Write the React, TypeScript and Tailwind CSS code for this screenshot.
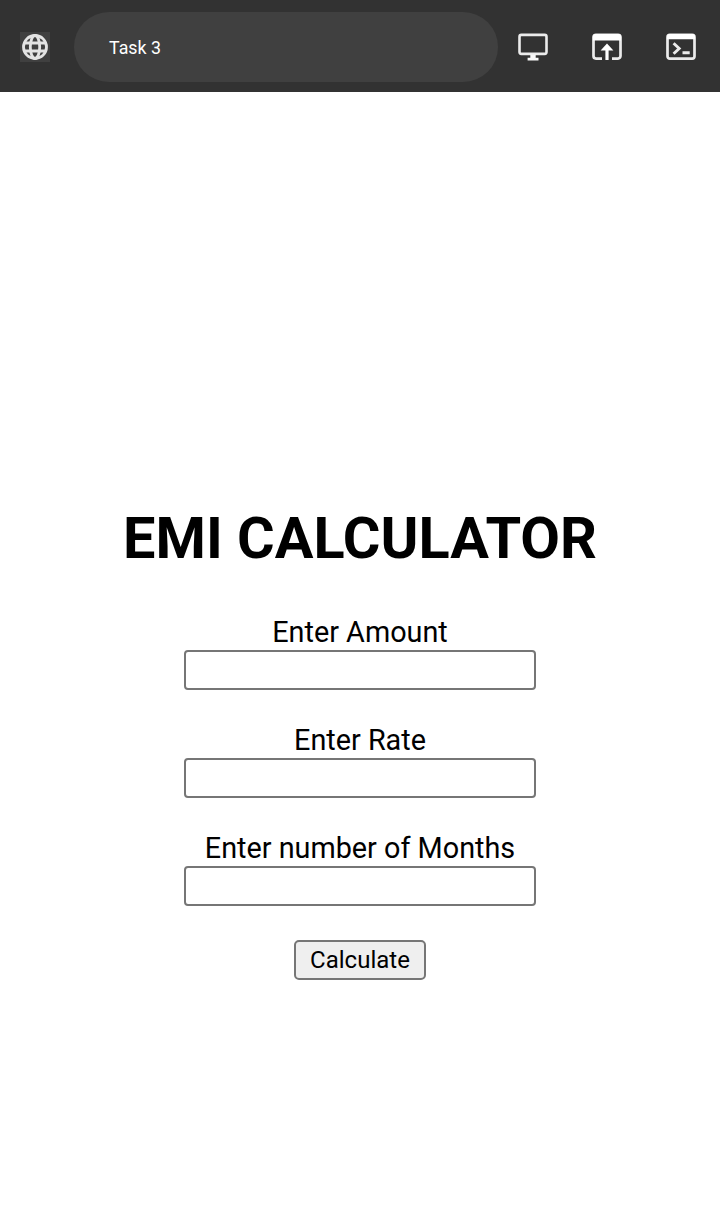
import type { ReactNode } from "react";

function Icon({ children }: { children: ReactNode }) {
  return (
    <svg viewBox="0 0 30 30" className="h-[30px] w-[30px]" fill="none" stroke="#ebebeb">
      {children}
    </svg>
  );
}

function GlobeIcon() {
  return (
    <svg viewBox="0 0 30 30" className="h-[30px] w-[30px] bg-[#404040]" fill="none" stroke="#e4e4e4" strokeWidth="2.8">
      <circle cx="15" cy="15" r="11.5" />
      <ellipse cx="15" cy="15" rx="4.7" ry="11.5" />
      <path d="M4.3 11h21.4M4.3 19h21.4" />
    </svg>
  );
}

function DesktopIcon() {
  return (
    <Icon>
      <rect x="1.5" y="2.9" width="27" height="19" rx="1.8" strokeWidth="2.6" />
      <path d="M12.3 22.5h5.4v3.2h2.8v2.7H9.6v-2.7h2.7z" fill="#f8f8f8" stroke="none" />
    </Icon>
  );
}

function OpenBrowserIcon() {
  return (
    <Icon>
      <path d="M10 26.6H4A2.5 2.5 0 0 1 1.5 24.1V5A2.5 2.5 0 0 1 4 2.9H26A2.5 2.5 0 0 1 28.5 5V24.1A2.5 2.5 0 0 1 26 26.6H20" strokeWidth="2.7" />
      <path d="M1 8.4V4.4A2.5 2.5 0 0 1 3.5 1.9h23A2.5 2.5 0 0 1 29 4.4v4z" fill="#fff" stroke="none" />
      <path d="M15 11.5l6.4 6.9h-4.8V28h-3.2v-9.6H8.6z" fill="#fff" stroke="none" />
    </Icon>
  );
}

function TerminalIcon() {
  return (
    <Icon>
      <rect x="1.5" y="2.9" width="27" height="23.7" rx="2.3" strokeWidth="2.7" />
      <path d="M1 7.2V4.4A2.5 2.5 0 0 1 3.5 1.9h23A2.5 2.5 0 0 1 29 4.4v2.8z" fill="#fff" stroke="none" />
      <path d="M7.6 11.2l5.6 5.3-5.6 5.3M16.5 20.8h7.2" strokeWidth="2.9" />
    </Icon>
  );
}

function Field({ id, label }: { id: string; label: string }) {
  return (
    <div className="flex flex-col items-center">
      <label htmlFor={id} className="mb-px text-[28.8px] leading-[34px]">{label}</label>
      <input id={id} type="text" className="h-10 w-[352px] rounded-[4px] border-2 border-[#767676] bg-white px-1 text-2xl outline-none" />
    </div>
  );
}

export default function App() {
  return (
    <div className="flex h-[1212px] w-[720px] flex-col bg-white font-['Roboto',sans-serif] text-black">
      <header className="flex h-[92px] items-start bg-[#323232] pt-3">
        <button aria-label="Site" className="mt-5 ml-5">
          <GlobeIcon />
        </button>
        <div className="ml-6 flex h-[70px] w-[424px] items-center rounded-full bg-[#404040] pl-[35px] text-[17.8px] text-white">
          <span className="pt-0.5">Task 3</span>
        </div>
        <div className="mt-5 ml-5 flex gap-11">
          <button aria-label="Desktop view"><DesktopIcon /></button>
          <button aria-label="Open in browser"><OpenBrowserIcon /></button>
          <button aria-label="Console"><TerminalIcon /></button>
        </div>
      </header>
      <main className="flex flex-col items-center pt-[413px]">
        <h1 className="mb-[42px] text-[57.6px] leading-[68px] font-bold">EMI CALCULATOR</h1>
        <div className="mb-[34px] flex flex-col gap-[33px]">
          <Field id="amount" label="Enter Amount" />
          <Field id="rate" label="Enter Rate" />
          <Field id="months" label="Enter number of Months" />
        </div>
        <button className="flex h-10 w-[132px] items-center justify-center rounded-[5px] border-2 border-[#767676] bg-[#efefef] text-2xl">
          Calculate
        </button>
      </main>
    </div>
  );
}
